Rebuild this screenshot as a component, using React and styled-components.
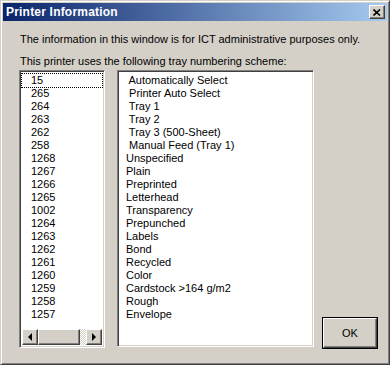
import styled, { createGlobalStyle } from "styled-components";

const GlobalStyle = createGlobalStyle`
  html, body { margin: 0; padding: 0; background: #d4d0c8; }
  * { box-sizing: border-box; }
`;

const FONT = `"Liberation Sans", "DejaVu Sans", sans-serif`;

const Window = styled.div`
  width: 390px;
  height: 365px;
  background: #d4d0c8;
  border: 1px solid;
  border-color: #d4d0c8 #404040 #404040 #d4d0c8;
  box-shadow: inset 1px 1px #fff, inset -1px -1px #808080;
  padding: 2px;
  display: flex;
  flex-direction: column;
  font-family: ${FONT};
  font-size: 11px;
  color: #000;
`;

const TitleBar = styled.div`
  height: 18px;
  background: linear-gradient(to right, #0a246a, #a6caf0);
  display: flex;
  align-items: center;
  justify-content: space-between;
  padding: 0 2px 0 3px;
`;

const Title = styled.span`
  color: #fff;
  font-weight: bold;
  font-size: 12px;
  letter-spacing: 0.2px;
`;

const RaisedButton = styled.div`
  background: #d4d0c8;
  border: 1px solid;
  border-color: #fff #404040 #404040 #fff;
  box-shadow: inset -1px -1px #808080;
  display: flex;
  align-items: center;
  justify-content: center;
`;

const CloseButton = styled(RaisedButton)`
  width: 16px;
  height: 14px;
`;

const Body = styled.div`
  flex: 1;
  display: flex;
  flex-direction: column;
  padding: 12px 9px 13px 16px;
`;

const Text = styled.div`
  line-height: 13px;
  margin-bottom: ${p => p.$gap || 0}px;
  padding-left: 1px;
`;

const Row = styled.div`
  flex: 1;
  display: flex;
  margin-top: 2px;
`;

const Sunken = styled.div`
  background: #fff;
  border: 1px solid;
  border-color: #808080 #fff #fff #808080;
  box-shadow: inset 1px 1px #404040, inset -1px -1px #d4d0c8;
  padding: 2px;
  display: flex;
  flex-direction: column;
`;

const LeftList = styled(Sunken)`
  width: 86px;
  height: 278px;
`;

const RightList = styled(Sunken)`
  width: 197px;
  height: 277px;
  margin-left: 12px;
`;

const Items = styled.div`
  flex: 1;
  padding-top: 1px;
`;

const Item = styled.div`
  height: 13px;
  line-height: 13px;
  white-space: pre;
  padding-left: ${p => p.$indent}px;
  outline: ${p => (p.$focus ? "1px dotted #000" : "none")};
  outline-offset: 0;
`;

const ScrollBar = styled.div`
  height: 16px;
  display: flex;
`;

const ArrowButton = styled(RaisedButton)`
  width: 16px;
  height: 16px;
`;

const Thumb = styled(RaisedButton)`
  width: 42px;
  height: 16px;
`;

const Track = styled.div`
  flex: 1;
  background-color: #d4d0c8;
  background-image: conic-gradient(#fff 25%, #d4d0c8 0 50%, #fff 0 75%, #d4d0c8 0);
  background-size: 2px 2px;
`;

const Side = styled.div`
  flex: 1;
  display: flex;
  align-items: flex-end;
  justify-content: flex-end;
  padding-bottom: 0;
`;

const OkButton = styled.div`
  width: 56px;
  height: 32px;
  border: 1px solid #000;
  display: flex;
`;

const OkInner = styled(RaisedButton)`
  flex: 1;
  font-size: 11px;
`;

const codes = ["15", "265", "264", "263", "262", "258", "1268", "1267", "1266", "1265", "1002", "1264", "1263", "1262", "1261", "1260", "1259", "1258", "1257"];

const names = [
  " Automatically Select",
  " Printer Auto Select",
  " Tray 1",
  " Tray 2",
  " Tray 3 (500-Sheet)",
  " Manual Feed (Tray 1)",
  "Unspecified",
  "Plain",
  "Preprinted",
  "Letterhead",
  "Transparency",
  "Prepunched",
  "Labels",
  "Bond",
  "Recycled",
  "Color",
  "Cardstock >164 g/m2",
  "Rough",
  "Envelope",
];

function Arrow({ dir }) {
  const d = dir === "left" ? "M5 0 L1 4 L5 8 Z" : "M1 0 L5 4 L1 8 Z";
  return (
    <svg width="6" height="8" viewBox="0 0 6 8">
      <path d={d} fill="#000" />
    </svg>
  );
}

export default function App() {
  return (
    <>
      <GlobalStyle />
      <Window>
        <TitleBar>
          <Title>Printer Information</Title>
          <CloseButton>
            <svg width="8" height="7" viewBox="0 0 8 7">
              <path d="M0.5 0.5 L7 6.5 M7 0.5 L0.5 6.5" stroke="#000" strokeWidth="1.6" />
            </svg>
          </CloseButton>
        </TitleBar>
        <Body>
          <Text $gap={9}>The information in this window is for ICT administrative purposes only.</Text>
          <Text>This printer uses the following tray numbering scheme:</Text>
          <Row>
            <LeftList>
              <Items>
                {codes.map((c, i) => (
                  <Item key={c} $indent={9} $focus={i === 0}>{c}</Item>
                ))}
              </Items>
              <ScrollBar>
                <ArrowButton><Arrow dir="left" /></ArrowButton>
                <Thumb />
                <Track />
                <ArrowButton><Arrow dir="right" /></ArrowButton>
              </ScrollBar>
            </LeftList>
            <RightList>
              <Items>
                {names.map(n => (
                  <Item key={n} $indent={6}>{n}</Item>
                ))}
              </Items>
            </RightList>
            <Side>
              <OkButton>
                <OkInner>OK</OkInner>
              </OkButton>
            </Side>
          </Row>
        </Body>
      </Window>
    </>
  );
}
